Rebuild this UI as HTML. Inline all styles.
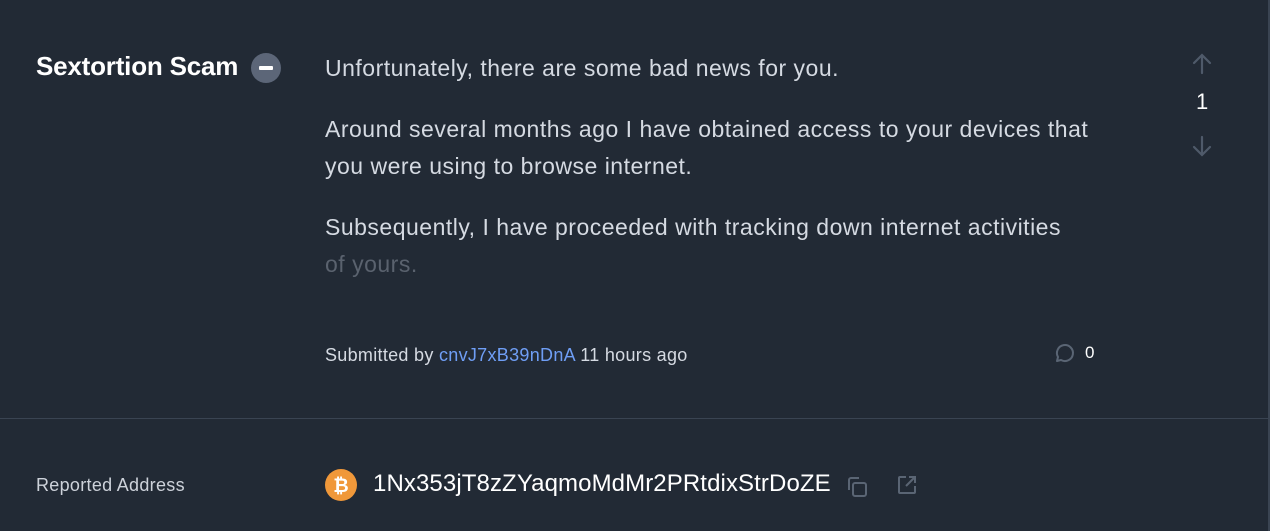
<!DOCTYPE html>
<html><head><style>
body{margin:0;width:1270px;height:531px;background:#222a35;font-family:"Liberation Sans",sans-serif;overflow:hidden;position:relative;color:#fff}
.rb{position:absolute;right:0;top:0;width:2px;height:531px;background:#3a4452}
.title{position:absolute;left:36px;top:51px;font-size:26px;font-weight:bold;color:#fff;letter-spacing:-0.2px}
.minus{position:absolute;left:251px;top:53px;width:30px;height:30px;border-radius:50%;background:#5c6678}
.minus:after{content:"";position:absolute;left:8px;top:13px;width:14px;height:4px;background:#fff;border-radius:1px}
.body{position:absolute;left:325px;top:50px;width:850px;font-size:23px;letter-spacing:0.5px;line-height:37px;color:#d5dae2;white-space:nowrap}
.body p{margin:0 0 24px}
.fade{color:#5a626e}
.sub{position:absolute;left:325px;top:345px;font-size:18px;letter-spacing:0.3px;color:#d5dae2}
.sub a{color:#6f9ef5}
.cnt{position:absolute;left:1196px;top:89px;font-size:22px;color:#fff}
.div{position:absolute;left:0;top:418px;width:1268px;height:1px;background:#3a4452}
.ra{position:absolute;left:36px;top:475px;font-size:18px;letter-spacing:0.3px;color:#cdd2da}
.addr{position:absolute;left:373px;top:470px;font-size:24px;letter-spacing:0.1px;color:#fff}
</style></head><body>
<div class="rb"></div>
<div class="title">Sextortion Scam</div>
<div class="minus"></div>
<div class="body">
<p>Unfortunately, there are some bad news for you.</p>
<p>Around several months ago I have obtained access to your devices that<br>you were using to browse internet.</p>
<p>Subsequently, I have proceeded with tracking down internet activities<br><span class="fade">of yours.</span></p>
</div>
<svg style="position:absolute;left:1190px;top:52px" width="24" height="24" viewBox="0 0 24 24" fill="none" stroke="#4f5a6a" stroke-width="2.2" stroke-linecap="round"><path d="M12 21V3M4 11l8-8 8 8"/></svg>
<div class="cnt">1</div>
<svg style="position:absolute;left:1190px;top:134px" width="24" height="24" viewBox="0 0 24 24" fill="none" stroke="#4f5a6a" stroke-width="2.2" stroke-linecap="round"><path d="M12 3v18M4 13l8 8 8-8"/></svg>
<div class="sub">Submitted by <a>cnvJ7xB39nDnA</a> 11 hours ago</div>
<svg style="position:absolute;left:1053px;top:342px" width="22" height="22" viewBox="0 0 22 22" fill="none" stroke="#5a6574" stroke-width="2"><path d="M4 19l1-4A8 8 0 1 1 8 18z" stroke-linejoin="round"/></svg>
<div style="position:absolute;left:1085px;top:343px;font-size:17px;color:#fff">0</div>
<div class="div"></div>
<div class="ra">Reported Address</div>
<svg style="position:absolute;left:325px;top:469px" width="32" height="32" viewBox="0 0 32 32"><circle cx="16" cy="16" r="16" fill="#f0983a"/><text x="16" y="23" text-anchor="middle" font-family="Liberation Sans" font-weight="bold" font-size="19" fill="#fff">₿</text></svg>
<div class="addr">1Nx353jT8zZYaqmoMdMr2PRtdixStrDoZE</div>
<svg style="position:absolute;left:845px;top:475px" width="24" height="24" viewBox="0 0 24 24" fill="none" stroke="#5a6574" stroke-width="2"><rect x="8" y="8" width="13" height="13" rx="2"/><path d="M4 15V5a2 2 0 0 1 2-2h8"/></svg>
<svg style="position:absolute;left:895px;top:473px" width="24" height="24" viewBox="0 0 24 24" fill="none" stroke="#5a6574" stroke-width="2"><path d="M11 4H5a1 1 0 0 0-1 1v14a1 1 0 0 0 1 1h14a1 1 0 0 0 1-1v-6M14 4h6v6M20 4l-9 9"/></svg>
</body></html>
